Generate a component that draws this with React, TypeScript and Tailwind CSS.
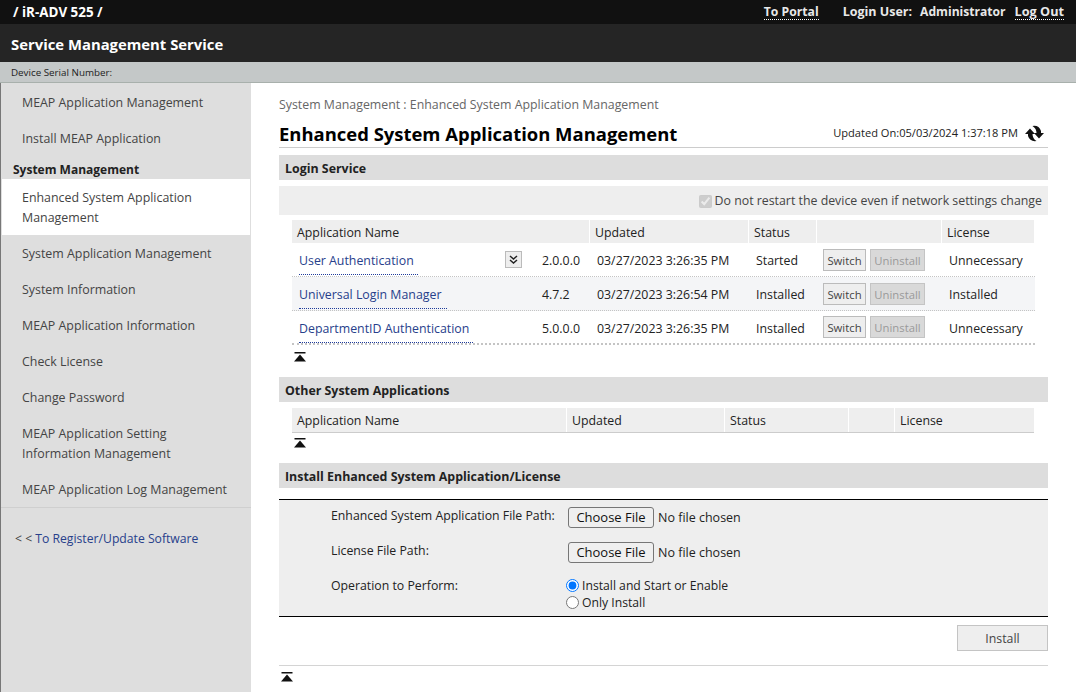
const font = { fontFamily: '"Open Sans", "Noto Sans", sans-serif' };

const sideItems = [
  'System Application Management',
  'System Information',
  'MEAP Application Information',
  'Check License',
  'Change Password',
];

const rows = [
  { name: 'User Authentication', w: 'w-[119px]', expand: true, ver: '2.0.0.0', date: '03/27/2023 3:26:35 PM', status: 'Started', license: 'Unnecessary' },
  { name: 'Universal Login Manager', w: 'w-[148px]', expand: false, ver: '4.7.2', date: '03/27/2023 3:26:54 PM', status: 'Installed', license: 'Installed' },
  { name: 'DepartmentID Authentication', w: 'w-[174px]', expand: false, ver: '5.0.0.0', date: '03/27/2023 3:26:35 PM', status: 'Installed', license: 'Unnecessary' },
];

const TopIcon = () => (
  <svg width="12" height="10" viewBox="0 0 12 10" className="block">
    <rect x="0.5" y="0" width="11" height="1.5" fill="#111" />
    <path d="M6 2.5 L12 9.5 H0 Z" fill="#111" />
  </svg>
);

const RefreshIcon = () => (
  <svg width="19" height="17" viewBox="0 0 19 17">
    <path d="M0 9 L5 3.5 L10 9 H7.5 Q7.5 13.5 11.5 16 Q5 17 3 11 V9 Z" fill="#111" />
    <path d="M0 9 L5 3.5 L10 9 H7.5 Q7.5 13.5 11.5 16 Q5 17 3 11 V9 Z" fill="#111" transform="rotate(180 9.5 8.5)" />
  </svg>
);

const ExpandIcon = () => (
  <svg width="9" height="9" viewBox="0 0 9 9" fill="none" stroke="#222" strokeWidth="1.5">
    <path d="M1 1 L4.5 4 L8 1" />
    <path d="M1 5 L4.5 8 L8 5" />
  </svg>
);

function SectionHead({ children }: { children: React.ReactNode }) {
  return (
    <div className="h-[25px] bg-[#dddddd] pl-[6px] pt-[3px] flex items-center text-[12.4px] font-bold text-[#222]">
      {children}
    </div>
  );
}

function SideLink({ children, top }: { children: React.ReactNode; top?: boolean }) {
  return <div className={`h-9 pl-[21px] flex items-center text-[12.4px] text-[#444] ${top ? 'pt-[5px]' : ''}`}>{children}</div>;
}

function HeadCell({ children, first }: { children?: React.ReactNode; first?: boolean }) {
  return (
    <div className={`h-full bg-[#eeeeee] flex items-center pl-[5px] pt-[3px] text-[12.35px] text-[#222] ${first ? '' : 'border-l border-white'}`}>
      {children}
    </div>
  );
}

const fileClass = 'text-[12.5px] h-[22px] file:h-[21px] file:w-[86px] file:mr-1 file:bg-[#efefef] file:border file:border-[#767676] file:rounded-[3px] file:text-[#111] file:text-[13px]';

export default function App() {
  return (
    <div style={font} className="w-[1076px] h-[692px] overflow-hidden bg-white flex flex-col">
      <div className="h-6 shrink-0 bg-[#111111] flex items-center text-[12.2px] font-bold text-[#e8e8e8]">
        <span className="ml-[13px] text-[13.4px] text-white">/ iR-ADV 525 /</span>
        <a className="ml-auto border-b border-dotted border-white leading-[15px]">To Portal</a>
        <span className="ml-6 text-[12.5px]">Login User:</span>
        <span className="ml-2 text-[12.1px]">Administrator</span>
        <a className="ml-[9px] mr-3 text-[12.7px] border-b border-dotted border-white leading-[15px]">Log Out</a>
      </div>
      <div className="h-[38px] shrink-0 bg-[#252525] pl-[11px] pt-[2px] flex items-center text-white text-[14.85px] font-bold">
        Service Management Service
      </div>
      <div className="h-[21px] shrink-0 bg-[#c4c8c8] border-b border-[#a8b0ac] pl-[11px] pt-[3px] flex items-center text-[9.8px] text-[#222]">
        Device Serial Number:
      </div>

      <div className="flex-1 flex min-h-0">
        <aside className="w-[251px] shrink-0 bg-[#dedede] border-l border-[#777]">
          <SideLink top>MEAP Application Management</SideLink>
          <SideLink top>Install MEAP Application</SideLink>
          <div className="h-[24px] pl-3 pt-[5px] flex items-center text-[12px] font-bold text-[#222]">System Management</div>
          <div className="h-14 ml-px mr-px bg-white pl-5 pt-[2px] flex items-center text-[12.4px] leading-5 text-[#444]">
            <span>Enhanced System Application<br />Management</span>
          </div>
          <div className="h-px" />
          {sideItems.map((s) => (
            <SideLink key={s}>{s}</SideLink>
          ))}
          <div className="h-14 pl-[21px] flex items-center text-[12.4px] leading-5 text-[#444]">
            <span>MEAP Application Setting<br />Information Management</span>
          </div>
          <div className="h-9 pl-[21px] pt-[1px] flex items-center text-[12.4px] text-[#444] border-b border-[#cfcfcf]">
            MEAP Application Log Management
          </div>
          <div className="mt-[21px] pl-[14px] text-[12.2px] leading-[20px] text-[#27408b]">
            <span className="text-[#444]">&lt; &lt;</span> To Register/Update Software
          </div>
        </aside>

        <main className="w-[769px] ml-[28px] text-[#222]">
          <div className="pt-[13px] h-[32px] text-[12.35px] leading-[18px] text-[#666]">
            System Management : Enhanced System Application Management
          </div>
          <div className="h-[33px] border-b border-[#cccccc] flex items-center pt-[5px]">
            <h1 className="text-[18.45px] font-bold text-black">Enhanced System Application Management</h1>
            <span className="ml-auto text-[11.1px] text-[#222]">Updated On:05/03/2024 1:37:18 PM</span>
            <span className="ml-[7px] mr-[4px] flex"><RefreshIcon /></span>
          </div>
          <div className="h-[7px]" />
          <SectionHead>Login Service</SectionHead>
          <div className="mt-[6px] h-[29px] bg-[#eeeeee] pt-[2px] flex items-center justify-end pr-[6px] text-[12.35px] text-[#444]">
            <input type="checkbox" checked disabled readOnly className="w-[13px] h-[13px] mr-[3px]" />
            Do not restart the device even if network settings change
          </div>

          <div className="mt-[5px] ml-[13px] w-[743px]">
            <div className="h-[23px] w-[742px] grid grid-cols-[297px_159px_68px_125px_93px]">
              <HeadCell first>Application Name</HeadCell>
              <HeadCell>Updated</HeadCell>
              <HeadCell>Status</HeadCell>
              <HeadCell />
              <HeadCell>License</HeadCell>
            </div>
            {rows.map((r, i) => (
              <div
                key={r.name}
                className={`h-[34px] grid grid-cols-[298px_160px_67px_126px_92px] items-center text-[12.35px] border-b border-dotted border-[#c4c4c4] ${i === 1 ? 'bg-[#f4f5f7]' : ''} ${i === 2 ? 'border-b-2' : ''}`}
              >
                <div className="flex items-center h-full">
                  <a className={`ml-[7px] ${r.w} h-[28px] mt-[3px] pt-[3px] border-b border-dotted border-[#1e3a9a] text-[#27408b] leading-[22px] whitespace-nowrap`}>
                    {r.name}
                  </a>
                  <div className="w-0 flex-1 flex items-center">
                    {r.expand && (
                      <span className="w-[17px] h-[17px] ml-auto mr-[20px] flex items-center justify-center bg-[#eeeeee] border border-[#bbbbbb]">
                        <ExpandIcon />
                      </span>
                    )}
                  </div>
                  <span className="w-[48px] pt-[4px] shrink-0 whitespace-nowrap">{r.ver}</span>
                </div>
                <div className="pl-[7px] pt-[4px] whitespace-nowrap">{r.date}</div>
                <div className="pl-[6px] pt-[4px]">{r.status}</div>
                <div className="pl-[6px] flex gap-1">
                  <button className="w-[43px] h-[22px] pt-[3px] bg-[#eeeeee] border border-[#bbbbbb] text-[11.3px] text-[#444]">Switch</button>
                  <button disabled className="w-[55px] h-[22px] pt-[3px] bg-[#d9d9d9] border border-[#c4c4c4] text-[11.3px] text-[#9a9a9a]">Uninstall</button>
                </div>
                <div className="pl-[6px] pt-[4px]">{r.license}</div>
              </div>
            ))}
            <div className="mt-[7px] ml-[2px]"><TopIcon /></div>
          </div>

          <div className="h-[15px]" />
          <SectionHead>Other System Applications</SectionHead>
          <div className="mt-[6px] ml-[13px] w-[742px]">
            <div className="h-[25px] grid grid-cols-[274px_158px_124px_46px_140px] border-b border-[#cccccc]">
              <HeadCell first>Application Name</HeadCell>
              <HeadCell>Updated</HeadCell>
              <HeadCell>Status</HeadCell>
              <HeadCell />
              <HeadCell>License</HeadCell>
            </div>
            <div className="mt-[5px] ml-[2px]"><TopIcon /></div>
          </div>

          <div className="h-[15px]" />
          <SectionHead>Install Enhanced System Application/License</SectionHead>
          <div className="mt-[11px] h-[118px] bg-[#eeeeee] border-y border-black text-[12.3px] text-[#222] grid grid-cols-[237px_1fr] grid-rows-[35px_35px_1fr] pl-[52px] pt-[7px]">
            <div className="leading-[18px]">Enhanced System Application File Path:</div>
            <input type="file" className={fileClass} />
            <div className="leading-[18px]">License File Path:</div>
            <input type="file" className={fileClass} />
            <div className="leading-[18px]">Operation to Perform:</div>
            <div className="-ml-[2px] leading-[17px] text-[12.2px]">
              <label className="flex items-center h-[17px]">
                <input type="radio" name="op" defaultChecked className="w-[13px] h-[13px] mr-[3px]" />
                Install and Start or Enable
              </label>
              <label className="flex items-center h-[17px]">
                <input type="radio" name="op" className="w-[13px] h-[13px] mr-[3px]" />
                Only Install
              </label>
            </div>
          </div>
          <div className="mt-2 flex justify-end">
            <button className="w-[91px] h-[26px] pt-[2px] bg-[#eeeeee] border border-[#c4c4c4] text-[12.35px] text-[#444]">Install</button>
          </div>
          <div className="mt-[14px] border-t border-[#d4d4d4] pt-[6px] pl-[2px]"><TopIcon /></div>
        </main>
      </div>
    </div>
  );
}
